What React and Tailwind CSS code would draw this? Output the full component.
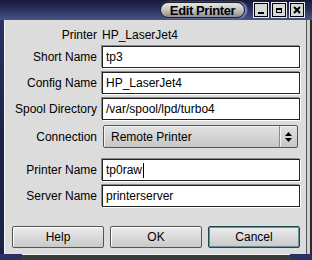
const font = { fontFamily: '"Liberation Sans", Arial, sans-serif' }

function Field({ value, cursor }) {
  return (
    <div className="h-[22px] bg-white border border-[#222] shadow-[-1px_-1px_0_#8a8a8a,1px_1px_0_#ffffff] flex items-center pl-[3px] text-[12px] text-black">
      <span>{value}</span>
      {cursor && <span className="w-px h-[15px] bg-black ml-[1px]" />}
    </div>
  )
}

function Row({ label, children, className = '' }) {
  return (
    <div className={`grid grid-cols-[92px_1fr] gap-[5px] items-center pr-[6px] ${className}`}>
      <span className="text-right text-[12px] text-black whitespace-nowrap">{label}</span>
      {children}
    </div>
  )
}

function WinButton({ children }) {
  return (
    <div className="w-[14px] h-[14px] bg-[#d8d8d8] border border-black shadow-[0_0_0_1px_#e8e8e8] flex items-center justify-center">
      {children}
    </div>
  )
}

function PushButton({ label, focused }) {
  return (
    <button
      className={`h-[22px] rounded-[2px] bg-gradient-to-b from-[#ececec] to-[#c9c9c9] text-[12px] text-black border ${
        focused ? 'border-[#1f4a52] shadow-[inset_0_0_0_1px_#6a8f96]' : 'border-[#555] shadow-[inset_1px_1px_0_#ffffff]'
      }`}
    >
      {label}
    </button>
  )
}

export default function App() {
  return (
    <div className="w-[312px] h-[260px] flex flex-col bg-[#1c2146] overflow-hidden" style={font}>
      {/* title bar */}
      <div className="h-[20px] shrink-0 bg-gradient-to-b from-[#161a3a] via-[#2b3262] to-[#4a5486] flex items-center justify-end pr-[8px]">
        <div className="h-[16px] w-[85px] rounded-full bg-gradient-to-b from-[#e4e4e4] via-[#c4c4c4] to-[#8c8c8c] border border-[#222] shadow-[2px_0_2px_#8fa0d8] flex items-center justify-center mr-[9px]">
          <span className="text-[13px] font-bold text-black tracking-[-0.4px] leading-none">Edit Printer</span>
        </div>
        <div className="flex gap-[4px]">
          <WinButton>
            <div className="w-[6px] h-[2px] bg-black mt-[5px]" />
          </WinButton>
          <WinButton>
            <div className="w-[6px] h-[5px] border border-black border-t-2" />
          </WinButton>
          <WinButton>
            <svg width="8" height="8" viewBox="0 0 8 8">
              <path d="M1 1L7 7M7 1L1 7" stroke="black" strokeWidth="2" />
            </svg>
          </WinButton>
        </div>
      </div>

      {/* body with side frame */}
      <div className="flex flex-1 min-h-0">
        <div className="w-[5px] bg-gradient-to-b from-[#2b3262] via-[#1e2347] to-[#1c2146] border-r border-[#f4f4f4]" />
        <div className="flex-1 bg-[#dcdcdc] flex flex-col pt-[6px]">
          <Row label="Printer" className="h-[18px]">
            <span className="text-[12px] text-black">HP_LaserJet4</span>
          </Row>
          <Row label="Short Name" className="mt-[2px]">
            <Field value="tp3" />
          </Row>
          <Row label="Config Name" className="mt-[4px]">
            <Field value="HP_LaserJet4" />
          </Row>
          <Row label="Spool Directory" className="mt-[4px]">
            <Field value="/var/spool/lpd/turbo4" />
          </Row>
          <Row label="Connection" className="mt-[5px]">
            <div className="h-[23px] mr-[2px] ml-[1px] rounded-[2px] border border-[#555] bg-gradient-to-b from-[#e2e2e2] to-[#c6c6c6] shadow-[inset_1px_1px_0_#f4f4f4] flex items-center">
              <span className="flex-1 pl-[7px] text-[12px] text-black">Remote Printer</span>
              <div className="w-[18px] h-full border-l border-[#8a8a8a] shadow-[inset_1px_0_0_#f4f4f4] flex flex-col items-center justify-center gap-[1px]">
                <svg width="7" height="10" viewBox="0 0 7 10">
                  <path d="M3.5 0L7 4H0Z M0 6H7L3.5 10Z" fill="black" />
                </svg>
              </div>
            </div>
          </Row>
          <Row label="Printer Name" className="mt-[11px]">
            <Field value="tp0raw" cursor />
          </Row>
          <Row label="Server Name" className="mt-[4px]">
            <Field value="printerserver" />
          </Row>
          <div className="grid grid-cols-3 gap-[6px] pl-[7px] pr-[6px] mt-[19px]">
            <PushButton label="Help" />
            <PushButton label="OK" />
            <PushButton label="Cancel" focused />
          </div>
        </div>
        <div className="w-[6px] bg-[#d0d0d0] border-l border-[#555] shadow-[inset_-2px_0_0_#2a2a2a]" />
      </div>

      {/* bottom frame */}
      <div className="h-[6px] shrink-0 flex">
        <div className="w-[22px] bg-[#2b3262]" />
        <div className="flex-1 bg-[#3a3a3a] border-t border-[#f0f0f0]" />
        <div className="w-[22px] bg-[#2b3262]" />
      </div>
    </div>
  )
}
